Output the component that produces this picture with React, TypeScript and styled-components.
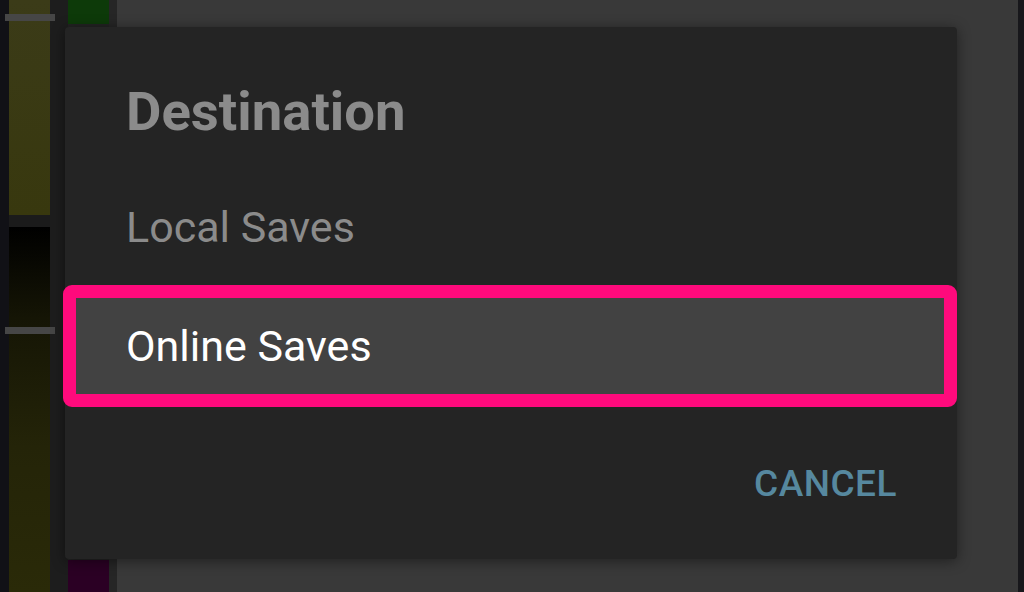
import React from "react";
import styled, { createGlobalStyle } from "styled-components";

const Global = createGlobalStyle`
  html, body { margin: 0; padding: 0; background: #16161a; }
  #root { width: 1024px; height: 592px; }
`;

const Screen = styled.div`
  position: relative;
  width: 1024px;
  height: 592px;
  overflow: hidden;
  display: flex;
  font-family: Roboto, "Noto Sans", sans-serif;
  background: #1e1e1e;
`;

const EdgeStrip = styled.div<{ $w: number; $bg: string }>`
  width: ${(p) => p.$w}px;
  flex-shrink: 0;
  background: ${(p) => p.$bg};
`;

const Meter = styled.div`
  position: relative;
  width: 41px;
  flex-shrink: 0;
  display: flex;
  flex-direction: column;
  background: #1b1b1b;
`;

const MeterTop = styled.div`
  height: 215px;
  background: linear-gradient(#3b3b18, #38380e);
`;

const MeterGap = styled.div`
  height: 12px;
  background: #1b1b1b;
`;

const MeterLow = styled.div`
  flex: 1;
  background: linear-gradient(#000000 0%, #151505 25%, #242408 60%, #2a2a08 100%);
`;

const Tick = styled.div<{ $top: number }>`
  position: absolute;
  left: -4px;
  top: ${(p) => p.$top}px;
  width: 50px;
  height: 7px;
  background: #464646;
`;

const ChannelCol = styled.div`
  width: 41px;
  flex-shrink: 0;
  display: flex;
  flex-direction: column;
  justify-content: space-between;
  background: #222222;
`;

const Swatch = styled.div<{ $h: number; $bg: string }>`
  height: ${(p) => p.$h}px;
  background: ${(p) => p.$bg};
`;

const Panel = styled.div`
  flex: 1;
  background: #393939;
`;

const Dialog = styled.div`
  position: absolute;
  left: 65px;
  top: 27px;
  width: 892px;
  height: 532px;
  box-sizing: border-box;
  background: #242424;
  border-radius: 4px;
  box-shadow: 0 2px 14px rgba(0, 0, 0, 0.45);
  display: flex;
  flex-direction: column;
`;

const Title = styled.div`
  margin: 52px 0 0 61px;
  font-size: 54.5px;
  line-height: 64px;
  font-weight: 700;
  color: #8b8b8b;
`;

const List = styled.div`
  margin-top: 20px;
  display: flex;
  flex-direction: column;
`;

const Item = styled.div<{ $selected?: boolean }>`
  height: 122px;
  box-sizing: border-box;
  margin-left: -2px;
  padding-left: 50px;
  padding-top: ${(p) => (p.$selected ? 0 : 6)}px;
  display: flex;
  align-items: center;
  border: 13px solid ${(p) => (p.$selected ? "#ff0a7c" : "transparent")};
  border-radius: 9px;
  background: ${(p) => (p.$selected ? "#424242" : "transparent")};
  color: ${(p) => (p.$selected ? "#ffffff" : "#8b8b8b")};
  font-size: 43px;
  line-height: 52px;
  font-weight: 400;
`;

const Actions = styled.div`
  flex: 1;
  display: flex;
  align-items: center;
  justify-content: flex-end;
  padding: 2px 60px 0 0;
`;

const TextButton = styled.button`
  border: none;
  background: none;
  padding: 0;
  font-family: Roboto, "Noto Sans", sans-serif;
  font-size: 37px;
  line-height: 44px;
  font-weight: 500;
  letter-spacing: 0.5px;
  color: #56889f;
  cursor: pointer;
`;

export default function App() {
  return (
    <>
      <Global />
      <Screen>
        <EdgeStrip $w={9} $bg="#111116" />
        <Meter>
          <MeterTop />
          <MeterGap />
          <MeterLow />
          <Tick $top={14} />
          <Tick $top={327} />
        </Meter>
        <EdgeStrip $w={18} $bg="#1d1d1d" />
        <ChannelCol>
          <Swatch $h={24} $bg="#0d3a09" />
          <Swatch $h={32} $bg="#2b0024" />
        </ChannelCol>
        <EdgeStrip $w={8} $bg="#262626" />
        <Panel />
        <EdgeStrip $w={6} $bg="#17171b" />
        <Dialog>
          <Title>Destination</Title>
          <List>
            <Item>Local Saves</Item>
            <Item $selected>Online Saves</Item>
          </List>
          <Actions>
            <TextButton>CANCEL</TextButton>
          </Actions>
        </Dialog>
      </Screen>
    </>
  );
}
